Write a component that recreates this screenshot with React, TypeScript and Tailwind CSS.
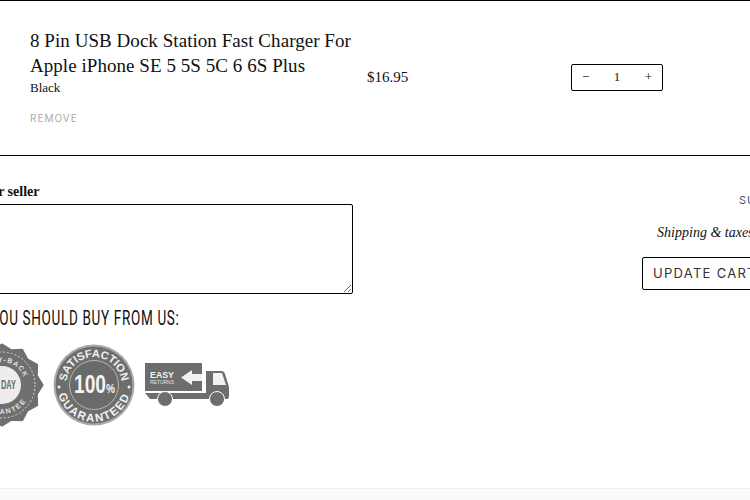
import React from 'react';

const serif = "font-['Liberation_Serif','DejaVu_Serif',serif]";
const caps = "font-['Inter','Liberation_Sans',sans-serif]";

function MoneyBackSeal() {
  const points = [];
  for (let i = 0; i < 24; i++) {
    const r = i % 2 === 0 ? 40 : 35.5;
    const a = (i / 24) * Math.PI * 2;
    points.push(`${42 + r * Math.cos(a)},${42 + r * Math.sin(a)}`);
  }
  return (
    <svg width="84" height="84" viewBox="0 0 84 84" className="shrink-0">
      <polygon points={points.join(' ')} fill="#6f6f6f" stroke="#6f6f6f" strokeWidth="3" strokeLinejoin="round" />
      <circle cx="42" cy="42" r="33" fill="none" stroke="#d8d8d8" strokeWidth="1" strokeDasharray="2 2" />
      <circle cx="42" cy="42" r="19" fill="#ededed" />
      <path id="moneyTop" d="M42 42 m-23 0 a23 23 0 0 1 46 0" fill="none" />
      <path id="moneyBottom" d="M42 42 m-29 0 a29 29 0 0 0 58 0" fill="none" />
      <text fontSize="7" fill="#e4e4e4" fontFamily="Liberation Sans" fontWeight="700" letterSpacing="1">
        <textPath href="#moneyTop" startOffset="50%" textAnchor="middle">MONEY-BACK</textPath>
      </text>
      <text fontSize="7" fill="#e4e4e4" fontFamily="Liberation Sans" fontWeight="700" letterSpacing="1.5">
        <textPath href="#moneyBottom" startOffset="50%" textAnchor="middle">GUARANTEE</textPath>
      </text>
      <text x="41" y="46" fontSize="13" fill="#6a6a6a" fontFamily="Liberation Sans" fontWeight="700" textLength="15" lengthAdjust="spacingAndGlyphs">DAY</text>
      <text x="27" y="46" fontSize="13" fill="#6a6a6a" fontFamily="Liberation Sans" fontWeight="700" textLength="12" lengthAdjust="spacingAndGlyphs">30</text>
    </svg>
  );
}

function SatisfactionSeal() {
  return (
    <svg width="82" height="82" viewBox="0 0 82 82" className="shrink-0">
      <circle cx="41" cy="41" r="40.5" fill="#a9a9a9" />
      <circle cx="41" cy="41" r="38.5" fill="#6e6e6e" />
      <circle cx="41" cy="41" r="24.5" fill="#6a6a6a" stroke="#b5b5b5" strokeWidth="1" />
      <path id="satTop" d="M17 55 A27.8 27.8 0 1 1 65 55" fill="none" />
      <path id="satBottom" d="M41 41 m-36.3 7 a37 37 0 0 0 72.6 0" fill="none" />
      <text fontSize="11" fill="#f2f2f2" fontFamily="Liberation Sans" fontWeight="700">
        <textPath href="#satTop" startOffset="50%" textAnchor="middle">SATISFACTION</textPath>
      </text>
      <text fontSize="11.5" fill="#f2f2f2" fontFamily="Liberation Sans" fontWeight="700" letterSpacing="1.5">
        <textPath href="#satBottom" startOffset="50%" textAnchor="middle">GUARANTEED</textPath>
      </text>
      <circle cx="6" cy="43" r="1.5" fill="#f2f2f2" />
      <circle cx="76" cy="43" r="1.5" fill="#f2f2f2" />
      <text x="21" y="49" fontSize="25" fill="#f4f4f4" fontFamily="Liberation Sans" fontWeight="700" textLength="32" lengthAdjust="spacingAndGlyphs">100</text>
      <text x="53" y="49" fontSize="12" fill="#f4f4f4" fontFamily="Liberation Sans" fontWeight="700" textLength="9" lengthAdjust="spacingAndGlyphs">%</text>
    </svg>
  );
}

function ReturnsTruck() {
  return (
    <svg width="85" height="44" viewBox="0 0 85 44" className="shrink-0">
      <rect x="0" y="0" width="57" height="28" fill="#6d6d6d" />
      <path d="M0 30 H61 V8 H76 Q79 8 80 11 L84 24 V33 Q84 36 82 36 H5 Z" fill="#6d6d6d" />
      <path d="M68 10 H77 L81 22 H68 Z" fill="#f1f1f1" />
      <circle cx="20" cy="36" r="7.5" fill="#6d6d6d" stroke="#fff" strokeWidth="1" />
      <circle cx="72" cy="36" r="7.5" fill="#6d6d6d" stroke="#fff" strokeWidth="1" />
      <path d="M36 14.5 L47 7 V11 H57 V18 H47 V22 Z" fill="#f1f1f1" />
      <text x="5" y="15" fontSize="9" fill="#f1f1f1" fontFamily="Liberation Sans" fontWeight="700" textLength="24" lengthAdjust="spacingAndGlyphs">EASY</text>
      <text x="5" y="21" fontSize="6" fill="#e4e4e4" fontFamily="Liberation Sans" textLength="24" lengthAdjust="spacingAndGlyphs">RETURNS</text>
    </svg>
  );
}

export default function App() {
  return (
    <div className="flex flex-col w-[750px] h-[500px] overflow-hidden bg-white text-[#111]">
      {/* cart line */}
      <div className="flex items-center h-[156px] shrink-0 border-y border-black pl-[30px] pb-[2px]">
        <div className="w-[337px] shrink-0 self-start pt-[27px]">
          <div className={`${serif} w-[330px] text-[19px] leading-[25px] tracking-[0.05px]`}>
            8 Pin USB Dock Station Fast Charger For Apple iPhone SE 5 5S 5C 6 6S Plus
          </div>
          <div className={`${serif} text-[13px] leading-[20px]`}>Black</div>
          <div className={`${caps} text-[10px] leading-[14px] tracking-[1px] text-[#aaa] mt-[13px]`}>REMOVE</div>
        </div>
        <div className={`${serif} w-[204px] shrink-0 text-[15px]`}>$16.95</div>
        <div className={`${serif} flex items-center justify-between w-[92px] h-[27px] border border-black rounded-[2px] px-[10px] text-[13px]`}>
          <span>−</span>
          <span>1</span>
          <span>+</span>
        </div>
      </div>

      {/* note + totals */}
      <div className="flex justify-between flex-1 min-h-0">
        <div className="-ml-[20px] w-[373px] shrink-0 pt-[28px]">
          <div className={`${serif} text-[14px] leading-[16px] font-bold -ml-[25px] whitespace-nowrap`}>
            Note for seller
          </div>
          <textarea className="block w-full h-[90px] mt-[4px] border border-black rounded-[2px] bg-white" />
          <div className="font-['Roboto',sans-serif] text-[20px] leading-[24px] tracking-[1px] mt-[12px] -ml-[25px] whitespace-nowrap origin-left scale-x-[0.675]">
            WHY YOU SHOULD BUY FROM US:
          </div>
          <div className="flex items-center mt-[13px] -ml-[20px]">
            <MoneyBackSeal />
            <div className="ml-[9px]">
              <SatisfactionSeal />
            </div>
            <div className="ml-[10px]">
              <ReturnsTruck />
            </div>
          </div>
        </div>

        <div className="flex flex-col items-end -mr-[133px] pt-[37px] shrink-0">
          <div className={`${caps} flex justify-between w-[144px] text-[11px] leading-[14px] tracking-[1px] text-[#555]`}>
            <span>SUBTOTAL</span>
            <span>$16.95</span>
          </div>
          <div className={`${serif} italic text-[14px] leading-[18px] mt-[17px] whitespace-nowrap`}>
            Shipping &amp; taxes calculated at checkout
          </div>
          <div className="flex gap-[8px] mt-[15px]">
            <div className={`${caps} flex items-center h-[33px] border border-black rounded-[2px] px-[10px] text-[13px] tracking-[1.3px] text-[#333]`}>
              UPDATE CART
            </div>
            <div className={`${caps} flex items-center h-[33px] border border-black rounded-[2px] px-[11px] text-[13px] tracking-[1.3px] text-[#333]`}>
              CHECKOUT
            </div>
          </div>
        </div>
      </div>

      <div className="h-[12px] shrink-0 border-t border-[#efefef] bg-[#fafafa]" />
    </div>
  );
}
